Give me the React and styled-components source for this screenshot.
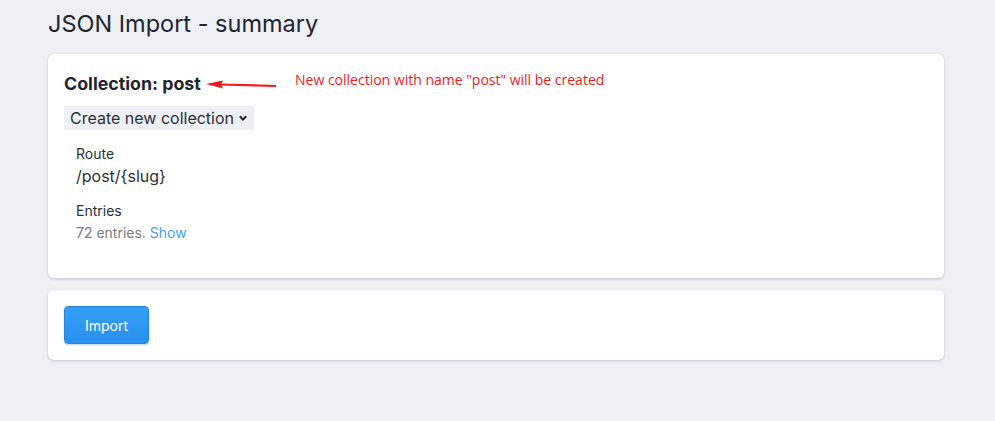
import styled, { createGlobalStyle } from "styled-components";

const Global = createGlobalStyle`
  html, body {
    margin: 0;
    background: #edf0f5;
    font-family: Inter, "Noto Sans", sans-serif;
    color: #222832;
  }
`;

const Page = styled.div`
  padding: 8px 51px 40px 48px;
  display: flex;
  flex-direction: column;
  gap: 12px;
`;

const Heading = styled.h1`
  margin: 0 0 2px;
  font-size: 23.5px;
  font-weight: 400;
  line-height: 32px;
  color: #1f2430;
`;

const Card = styled.section`
  position: relative;
  display: flex;
  flex-direction: column;
  align-items: flex-start;
  background: #fff;
  border-radius: 6px;
  box-shadow: 0 1px 3px rgba(60, 70, 100, 0.25);
  padding: ${(p) => p.$pad};
`;

const CollectionTitle = styled.h2`
  margin: 0;
  font-size: 17.8px;
  font-weight: 700;
  line-height: 24px;
  color: #1f2430;
`;

const Select = styled.div`
  display: inline-flex;
  align-items: center;
  gap: 4px;
  height: 24px;
  margin-top: 10px;
  padding: 0 6px;
  background: #edf0f5;
  font-size: 16px;
  color: #2a2f3a;
`;

const Details = styled.dl`
  margin: 14px 0 0 12px;
  display: flex;
  flex-direction: column;
`;

const Label = styled.dt`
  font-size: 14px;
  line-height: 20px;
  color: #2a2f3a;
`;

const Value = styled.dd`
  margin: 0 0 ${(p) => (p.$last ? "0" : "13px")};
  font-size: ${(p) => (p.$muted ? "14px" : "16px")};
  line-height: 24px;
  color: ${(p) => (p.$muted ? "#777c85" : "#2a2f3a")};
`;

const Link = styled.a`
  color: #4a9ef2;
  text-decoration: none;
`;

const Note = styled.div`
  position: absolute;
  left: 158px;
  top: 17px;
  display: flex;
  align-items: flex-start;
  gap: 17px;
  font-family: "Open Sans", sans-serif;
  font-size: 14px;
  line-height: 18px;
  color: #f21b1b;

  svg {
    margin-top: 9px;
  }
`;

const Button = styled.button`
  font-family: Inter, sans-serif;
  font-size: 14px;
  color: #fff;
  width: 85px;
  height: 38px;
  border: 1px solid #2785d8;
  border-radius: 4px;
  background: linear-gradient(#33a0f7, #2a8fee);
  box-shadow: 0 1px 2px rgba(30, 80, 140, 0.3);
`;

const Chevron = () => (
  <svg width="10" height="10" viewBox="0 0 10 10">
    <path d="M1.8 3.3 L5 6.6 L8.2 3.3" fill="none" stroke="#222" strokeWidth="2" />
  </svg>
);

const Arrow = () => (
  <svg width="72" height="10" viewBox="0 0 72 10">
    <path d="M14 4.5 L70 6" stroke="#f21b1b" strokeWidth="2.2" fill="none" />
    <path d="M0 4 L17 0.5 L15 4.5 L17 8.5 Z" fill="#f21b1b" />
  </svg>
);

export default function App() {
  return (
    <>
      <Global />
      <Page>
        <Heading>JSON Import - summary</Heading>
        <Card $pad="18px 16px 33px">
          <CollectionTitle>Collection: post</CollectionTitle>
          <Note>
            <Arrow />
            <span>New collection with name "post" will be created</span>
          </Note>
          <Select>
            Create new collection <Chevron />
          </Select>
          <Details>
            <Label>Route</Label>
            <Value>/post/{"{slug}"}</Value>
            <Label>Entries</Label>
            <Value $muted $last>
              72 entries. <Link href="#">Show</Link>
            </Value>
          </Details>
        </Card>
        <Card $pad="16px 16px 16px">
          <Button>Import</Button>
        </Card>
      </Page>
    </>
  );
}
